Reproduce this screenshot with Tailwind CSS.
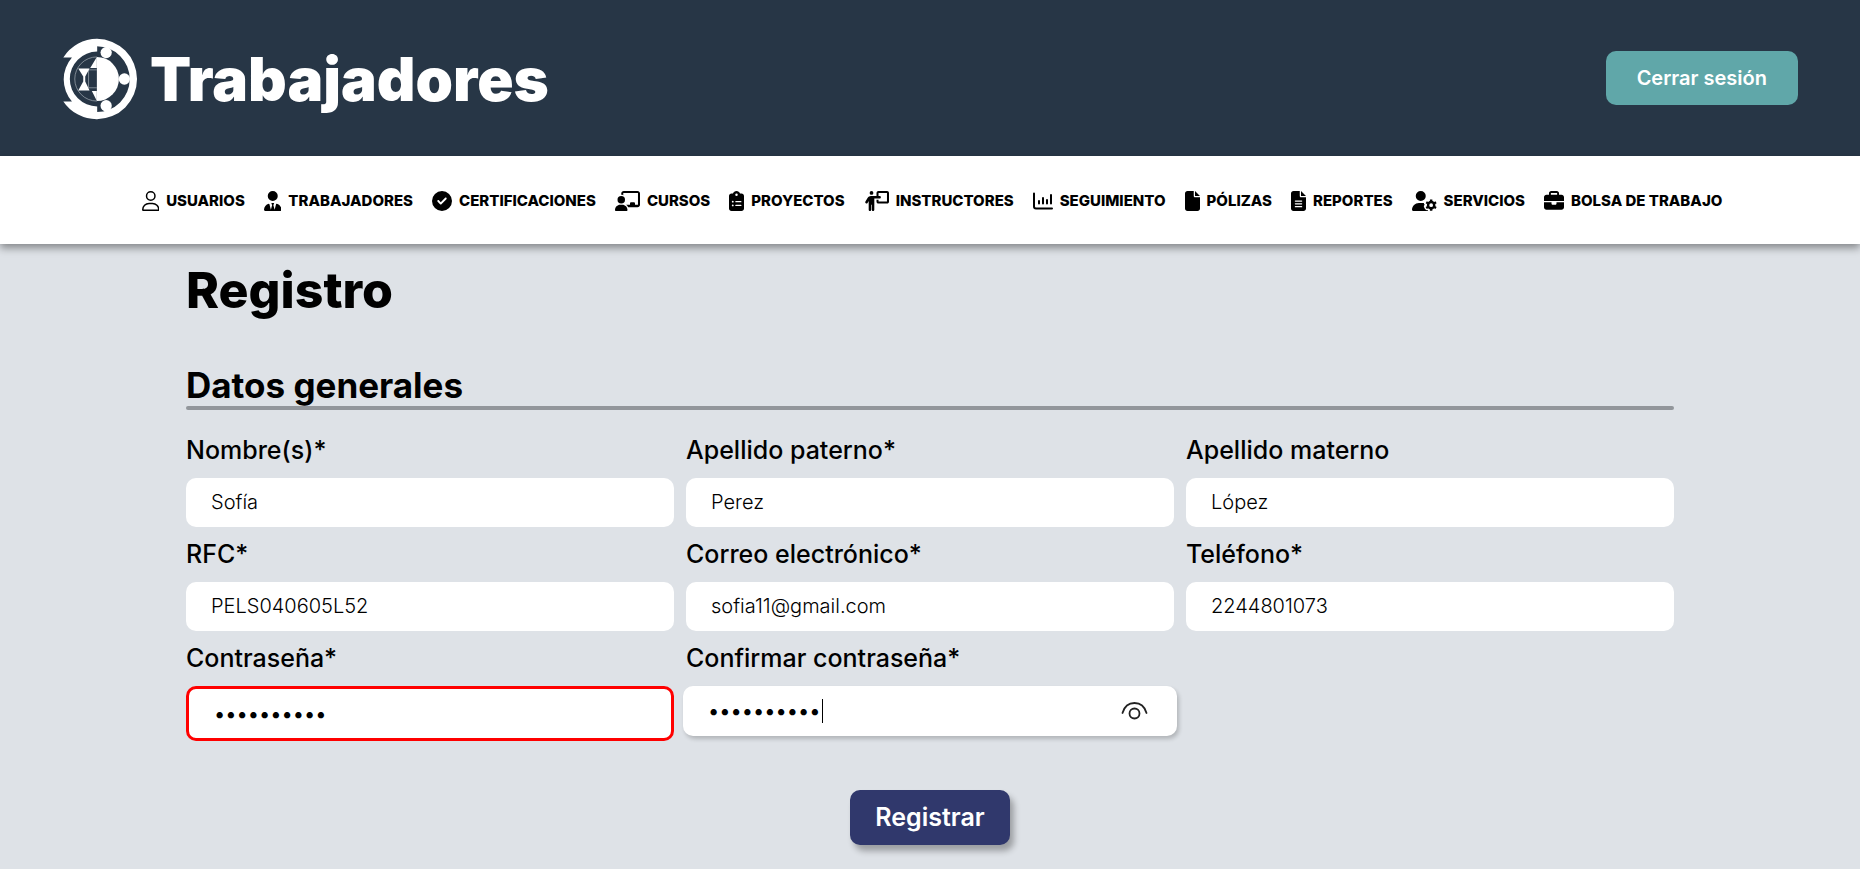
<!DOCTYPE html>
<html lang="es">
<head>
<meta charset="utf-8">
<meta name="viewport" content="width=device-width, initial-scale=1">
<title>Trabajadores - Registro</title>
<script src="https://cdn.jsdelivr.net/npm/@tailwindcss/browser@4"></script>
</head>
<body class="min-h-screen bg-[#dee2e7] font-['Inter',sans-serif] text-black">
<header class="flex h-[156px] items-center justify-between bg-[#273646] pr-[62px] pl-[63px]">
  <a href="#" class="flex items-center gap-3 pt-0.5 text-white">
    <svg class="h-[82px] w-[75px]" viewBox="39 37 226 247" fill="#fff" aria-hidden="true">
      <path d="M141 39.500A121 121 0 0 1 141 281.500V260A99 99 0 0 0 141 62Z"/>
      <path d="M142 39.500A121 121 0 0 0 40 96H66A100 100 0 0 0 66 228H40A121 121 0 0 0 142 281.500V243A82.500 82.500 0 0 1 142 78Z"/>
      <path d="M141 94A66.500 66.500 0 0 1 141 227Z"/>
      <circle cx="169" cy="81" r="17"/><circle cx="224" cy="160.500" r="17"/><circle cx="169" cy="241" r="17"/>
      <path d="M141 94A66.500 66.500 0 0 0 141 227M116 133H141M116 187H141M116 133V187" fill="none" stroke="#aab1b9" stroke-width="2"/>
      <path d="M85 129H119L106 153V168L119 195H85L100 168V153ZM141 94L121 127H141ZM141 227L126 197H141Z"/>
    </svg>
    <span class="text-[60px] leading-none font-black">Trabajadores</span>
  </a>
  <button type="button" class="h-[54px] rounded-[10px] bg-[#60a7a9] px-[31px] text-[20px] font-semibold text-white">Cerrar sesión</button>
</header>

<nav class="relative flex h-[88px] items-center justify-center gap-[19px] bg-white pt-0.5 pl-1 text-[15px] font-extrabold whitespace-nowrap shadow-[0_4px_8px_rgba(0,0,0,0.4)]">
  <a href="#" class="flex items-center gap-[7px]"><svg class="h-5" viewBox="0 0 448 512"><path fill="none" stroke="#000" stroke-width="38" d="M224 20a108 108 0 1 1 0 216a108 108 0 1 1 0-216ZM180 318H268C358 318 429 390 429 478C429 486 424 492 416 492H32C24 492 19 486 19 478C19 390 90 318 180 318Z"/></svg>USUARIOS</a>
  <a href="#" class="flex items-center gap-[7px]"><svg class="h-5" viewBox="0 0 448 512"><path d="M96 128a128 128 0 1 0 256 0A128 128 0 1 0 96 128zm94.500 200.200l18.600 31L175.800 483.100l-36-146.900c-2-8.100-9.800-13.400-17.900-11.300C51.900 342.400 0 405.800 0 481.300c0 17 13.800 30.700 30.700 30.700H417.300c17 0 30.700-13.800 30.700-30.700c0-75.500-51.900-138.900-121.900-156.400c-8.100-2-15.900 3.300-17.900 11.300l-36 146.900L238.900 359.200l18.600-31c6.400-10.700-1.300-24.200-13.700-24.200H204.300c-12.400 0-20.100 13.600-13.700 24.200z"/></svg>TRABAJADORES</a>
  <a href="#" class="flex items-center gap-[7px]"><svg class="h-5" viewBox="0 0 512 512"><path d="M256 512A256 256 0 1 0 256 0a256 256 0 1 0 0 512zM369 209L241 337c-9.400 9.400-24.600 9.400-33.900 0l-64-64c-9.400-9.400-9.400-24.600 0-33.900s24.600-9.400 33.900 0l47 47L335 175c9.400-9.400 24.600-9.400 33.900 0s9.400 24.600 0 33.900z"/></svg>CERTIFICACIONES</a>
  <a href="#" class="flex items-center gap-[7px]"><svg class="h-5" viewBox="0 0 640 512"><path d="M160 64c0-35.300 28.700-64 64-64H576c35.300 0 64 28.700 64 64V352c0 35.300-28.700 64-64 64H336.800c-11.800-25.500-29.900-47.500-52.400-64H384V320c0-17.700 14.300-32 32-32h64c17.700 0 32 14.300 32 32v32h76V52L212 52v56C198 100 180 96 160 96V64zm0 64a96 96 0 1 1 0 192 96 96 0 1 1 0-192zM133.300 352h53.300C260.300 352 320 411.700 320 485.300c0 14.700-11.900 26.700-26.700 26.700H26.700C11.900 512 0 500.100 0 485.300C0 411.700 59.700 352 133.300 352z"/></svg>CURSOS</a>
  <a href="#" class="flex items-center gap-[7px]"><svg class="h-5" viewBox="0 0 384 512"><path d="M192 0c-41.800 0-77.400 26.700-90.500 64H64C28.700 64 0 92.700 0 128V448c0 35.300 28.700 64 64 64H320c35.300 0 64-28.700 64-64V128c0-35.300-28.700-64-64-64H282.500C269.400 26.700 233.800 0 192 0zm0 64a32 32 0 1 1 0 64 32 32 0 1 1 0-64zM72 272a24 24 0 1 1 48 0 24 24 0 1 1 -48 0zm104-16H304c8.800 0 16 7.200 16 16s-7.200 16-16 16H176c-8.800 0-16-7.200-16-16s7.200-16 16-16zM72 368a24 24 0 1 1 48 0 24 24 0 1 1 -48 0zm88 0c0-8.800 7.200-16 16-16H304c8.800 0 16 7.200 16 16s-7.200 16-16 16H176c-8.800 0-16-7.200-16-16z"/></svg>PROYECTOS</a>
  <a href="#" class="flex items-center gap-[7px]"><svg class="h-5" viewBox="0 0 640 512"><path d="M192 96a48 48 0 1 0 0-96 48 48 0 1 0 0 96zm-8 384V352h16V480c0 17.700 14.300 32 32 32s32-14.300 32-32V192H400c17.700 0 32-14.300 32-32s-14.300-32-32-32H372V52H588V268H372V224H320v48c0 26.500 21.500 48 48 48H592c26.500 0 48-21.500 48-48V48c0-26.500-21.500-48-48-48H368c-26.500 0-48 21.500-48 48v80H177.100c-33.700 0-64.900 17.700-82.300 46.600l-58.300 97c-9.100 15.100-4.200 34.800 10.900 43.900s34.800 4.200 43.900-10.900L120 256.900V480c0 17.700 14.300 32 32 32s32-14.300 32-32z"/></svg>INSTRUCTORES</a>
  <a href="#" class="flex items-center gap-[7px]"><svg class="h-5" viewBox="0 0 20 20" fill="none" stroke="#000" stroke-width="2" stroke-linecap="round"><path d="M1 2.500V15.500Q1 17.500 3 17.500H19M6 10V12.500M10 7V12.500M14 9V12.500M18 4V12.500"/></svg>SEGUIMIENTO</a>
  <a href="#" class="flex items-center gap-[7px]"><svg class="h-5" viewBox="0 0 384 512"><path d="M0 64C0 28.700 28.700 0 64 0H224V128c0 17.700 14.300 32 32 32H384V448c0 35.300-28.700 64-64 64H64c-35.300 0-64-28.700-64-64V64zm384 64H256V0L384 128z"/></svg>PÓLIZAS</a>
  <a href="#" class="flex items-center gap-[7px]"><svg class="h-5" viewBox="0 0 384 512"><path d="M0 64C0 28.700 28.700 0 64 0H224V128c0 17.700 14.300 32 32 32H384V448c0 35.300-28.700 64-64 64H64c-35.300 0-64-28.700-64-64V64zm384 64H256V0L384 128z"/><path d="M112 256H272M112 328H272M112 400H272" stroke="#fff" stroke-width="32" stroke-linecap="round"/></svg>REPORTES</a>
  <a href="#" class="flex items-center gap-[7px]"><svg class="h-5" viewBox="0 0 640 512"><path d="M224 0a128 128 0 1 1 0 256A128 128 0 1 1 224 0zM178.300 304h91.400c11.800 0 23.400 1.200 34.500 3.300c-2 18 7 35 22 45c-17 11-27 32-20 53c4 13 9.400 25.500 16.400 37.600s15.200 23.100 24.400 33c16 17 40 18 57 9c0 9 3 19 8 27H29.700C13.300 512 0 498.700 0 482.300C0 383.800 79.800 304 178.300 304z"/><g fill="none" stroke="#000" transform="translate(490 362)"><circle r="79" stroke-width="62"/><path stroke-width="62" stroke-linejoin="round" d="M0-95V-146M0 95V146M82-48L126-73M-82 48L-126 73M82 48L126 73M-82-48L-126-73"/></g></svg>SERVICIOS</a>
  <a href="#" class="flex items-center gap-[7px]"><svg class="h-5" viewBox="0 0 512 512"><path d="M184 48H328c4.400 0 8 3.600 8 8V96H176V56c0-4.400 3.600-8 8-8zm-56 8V96H64C28.700 96 0 124.700 0 160v96H512V160c0-35.300-28.700-64-64-64H384V56c0-30.900-25.100-56-56-56H184c-30.900 0-56 25.100-56 56zM512 288H320v32c0 17.700-14.300 32-32 32H224c-17.700 0-32-14.300-32-32V288H0V416c0 35.300 28.700 64 64 64H448c35.300 0 64-28.700 64-64V288z"/></svg>BOLSA DE TRABAJO</a>
</nav>

<main class="mx-auto w-4/5 pt-4">
  <h1 class="text-[50px] leading-[60px] font-extrabold">Registro</h1>
  <form class="pt-[44px]">
    <h2 class="text-[35px] leading-[42px] font-bold">Datos generales</h2>
    <div class="h-1 rounded-full bg-[#92969b]"></div>
    <div class="mt-[25px] grid grid-cols-3 items-start gap-3 text-[20px] font-light">
      <div class="flex flex-col gap-[13px]"><label for="nombre" class="text-[25px] leading-[30px] font-medium">Nombre(s)*</label><input id="nombre" type="text" value="Sofía" class="h-[49px] w-full rounded-[10px] bg-white px-[25px] pb-0.5 outline-none"></div>
      <div class="flex flex-col gap-[13px]"><label for="paterno" class="text-[25px] leading-[30px] font-medium">Apellido paterno*</label><input id="paterno" type="text" value="Perez" class="h-[49px] w-full rounded-[10px] bg-white px-[25px] pb-0.5 outline-none"></div>
      <div class="flex flex-col gap-[13px]"><label for="materno" class="text-[25px] leading-[30px] font-medium">Apellido materno</label><input id="materno" type="text" value="López" class="h-[49px] w-full rounded-[10px] bg-white px-[25px] pb-0.5 outline-none"></div>
      <div class="flex flex-col gap-[13px]"><label for="rfc" class="text-[25px] leading-[30px] font-medium">RFC*</label><input id="rfc" type="text" value="PELS040605L52" class="h-[49px] w-full rounded-[10px] bg-white px-[25px] pb-0.5 outline-none"></div>
      <div class="flex flex-col gap-[13px]"><label for="correo" class="text-[25px] leading-[30px] font-medium">Correo electrónico*</label><input id="correo" type="email" value="sofia11@gmail.com" class="h-[49px] w-full rounded-[10px] bg-white px-[25px] pb-0.5 outline-none"></div>
      <div class="flex flex-col gap-[13px]"><label for="telefono" class="text-[25px] leading-[30px] font-medium">Teléfono*</label><input id="telefono" type="tel" value="2244801073" class="h-[49px] w-full rounded-[10px] bg-white px-[25px] pb-0.5 outline-none"></div>
      <div class="flex flex-col gap-[13px]"><label for="clave" class="text-[25px] leading-[30px] font-medium">Contraseña*</label><input id="clave" type="password" value="contrasena" class="h-[55px] w-full rounded-[10px] border-3 border-[#ff0000] bg-white px-[25px] font-normal outline-none"></div>
      <div class="flex flex-col gap-[13px]"><label for="confirmar" class="text-[25px] leading-[30px] font-medium">Confirmar contraseña*</label>
        <div class="relative -mx-[3px]">
          <input id="confirmar" type="password" value="contrasena" class="h-[50px] w-full rounded-[10px] bg-white px-[25px] font-normal shadow-[2px_3px_4px_rgba(0,0,0,0.2)] outline-none">
          <span class="absolute top-[13px] left-[139px] h-6 w-px bg-black"></span>
          <button type="button" aria-label="Mostrar contraseña" class="absolute top-[15px] right-[29px]"><svg class="h-5 w-[27px]" viewBox="0 0 27 20" fill="none" stroke="#222" stroke-width="1.800" stroke-linecap="round"><path d="M1.500 12C3.500 5 8 2 13.500 2S23.500 5 25.500 12"/><circle cx="13.500" cy="12.500" r="5"/></svg></button>
        </div>
      </div>
    </div>
    <div class="mt-[49px] flex justify-center pb-6">
      <button type="submit" class="h-[55px] rounded-[10px] bg-[#30386c] px-[25px] text-[25px] font-semibold text-white shadow-[4px_6px_6px_rgba(0,0,0,0.3)]">Registrar</button>
    </div>
  </form>
</main>
</body>
</html>
